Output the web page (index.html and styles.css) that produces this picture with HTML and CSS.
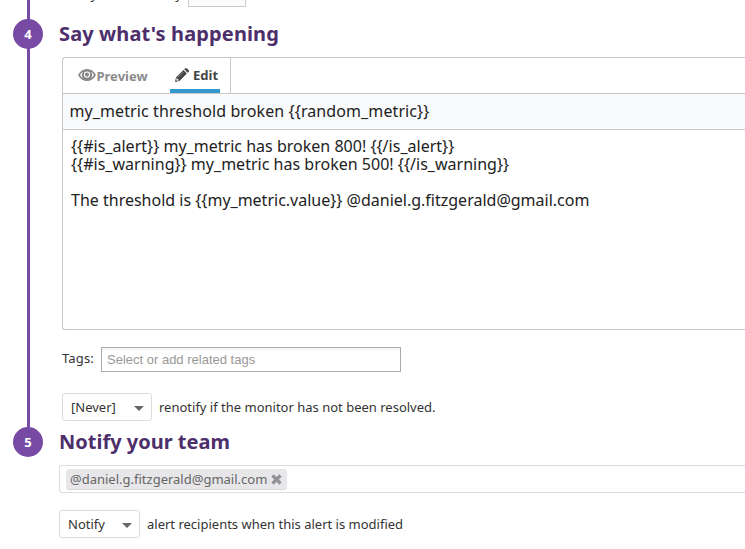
FILE: index.html
```html
<!DOCTYPE html>
<html lang="en">
<head>
<meta charset="utf-8">
<title>Monitor</title>
<link rel="stylesheet" href="styles.css">
</head>
<body>
<main class="monitor">
  <section class="step step-previous">
    <div class="rail"></div>
    <div class="content delay"><span class="delay-label">Delay evaluation by</span><span class="delay-input"></span></div>
  </section>
  <section class="step step-message">
    <div class="rail"><span class="number">4</span></div>
    <div class="content">
      <h2 class="title title-message">Say what's happening</h2>
      <div class="editor">
        <div class="tabs">
          <span class="tab preview">
            <svg class="eye" viewBox="0 0 18 14" width="18" height="14"><path d="M0 7C2.200 3 5.300 1 9 1s6.800 2 9 6c-2.200 4-5.300 6-9 6S2.200 11 0 7Z" fill="#888"/><path d="M2 7C2.900 5.500 3.900 4.400 5.200 3.700a5 5 0 0 0 0 6.600C3.900 9.600 2.900 8.500 2 7ZM16 7c-.9-1.500-1.900-2.600-3.200-3.300a5 5 0 0 1 0 6.600c1.300-.7 2.300-1.800 3.200-3.300Z" fill="#fff"/><circle cx="9" cy="6.600" r="2.600" fill="none" stroke="#fff" stroke-width="1.100"/></svg><span class="preview-text">Preview</span>
          </span>
          <span class="tab edit">
            <svg class="pencil" viewBox="0 0 14 14" width="14" height="14"><path d="M0 14 1 9.500 8.400 2.100l3.500 3.500L4.500 13ZM9.200 1.300 10.100.4q.9-.8 1.800 0l1.700 1.700q.8.900 0 1.800l-.9.900Z" fill="#444"/><path d="m1.800 10.200 2 2L2 12.700l-.7-.7ZM3 9.400 8.500 3.900" fill="#fff" stroke="#bbb" stroke-width=".6"/></svg><span class="edit-text">Edit</span>
          </span>
        </div>
        <div class="subject"><span class="subject-text">my_metric threshold broken {{random_metric}}</span></div>
        <div class="message"><div><span class="line1">{{#is_alert}} my_metric has broken 800! {{/is_alert}}</span></div><div><span class="line2">{{#is_warning}} my_metric has broken 500! {{/is_warning}}</span></div><div><br></div><div><span class="line3">The threshold is {{my_metric.value}} @daniel.g.fitzgerald@gmail.com</span></div></div>
      </div>
      <div class="tags"><span class="tags-label">Tags:</span><div class="tags-input"><span class="placeholder">Select or add related tags</span></div></div>
      <div class="row renotify">
        <div class="select never"><span class="never-text">[Never]</span><svg class="caret" width="10" height="5" viewBox="0 0 10 5"><path d="M0 0h10L5 5Z"/></svg></div>
        <span class="row-text renotify-text">renotify if the monitor has not been resolved.</span>
      </div>
    </div>
  </section>
  <section class="step step-team">
    <div class="rail"><span class="number">5</span></div>
    <div class="content">
      <h2 class="title title-team">Notify your team</h2>
      <div class="recipients"><span class="chip"><span class="chip-text">@daniel.g.fitzgerald@gmail.com</span><svg class="remove" width="11" height="11" viewBox="0 0 11 11"><path d="m1.500 1.500 8 8m0-8-8 8" fill="none" stroke="#929297" stroke-width="3.300"/></svg></span></div>
      <div class="row notify">
        <div class="select notify-select"><span class="notify-text">Notify</span><svg class="caret" width="10" height="5" viewBox="0 0 10 5"><path d="M0 0h10L5 5Z"/></svg></div>
        <span class="row-text modified-text">alert recipients when this alert is modified</span>
      </div>
    </div>
  </section>
</main>
</body>
</html>
```
FILE: styles.css
```css
* { box-sizing: border-box; }
body { margin: 0; overflow: hidden; background: #fff; color: #333; font: 13px/18px "Noto Sans", sans-serif; }
.monitor { width: 745px; height: 549px; overflow: hidden; }
.step { display: flex; }
.step-previous { height: 19px; }
.step-message { height: 408px; }
.step-team { height: 122px; }
.rail { flex: 0 0 59px; padding-left: 13px; background: linear-gradient(#774aa4, #774aa4) 27px 0 / 3px 100% no-repeat; }
.step-team .rail { background: none; }
.number { display: flex; align-items: center; justify-content: center; width: 30px; height: 30px; border-radius: 50%; background: #774aa4; color: #fff; font-size: 13px; font-weight: 700; }
.content { flex: 1; min-width: 0; }
.delay { display: flex; padding-left: 3px; }
.delay-label { width: 126px; margin-top: -15px; padding-left: 1px; white-space: nowrap; }
.delay-input { width: 58px; height: 27px; margin-top: -20px; border: 1px solid #ccc; background: #fcfcfc; }
.title { margin: 0; height: 30px; line-height: 30px; font-size: 20px; font-weight: 700; color: #4d2f6b; white-space: nowrap; }
.title-message { margin-bottom: 8px; letter-spacing: .12px; }
.editor { height: 273px; margin-left: 3px; border: 1px solid #c8c8cc; border-right: 0; border-radius: 3px 0 0 3px; overflow: hidden; }
.tabs { display: flex; width: 168px; height: 35px; padding-left: 15px; border-right: 1px solid #c8c8cc; font-weight: 700; }
.tab { display: flex; align-items: center; height: 35px; white-space: nowrap; }
.preview { width: 92px; color: #8b8b8b; }
.preview-text { margin-left: .5px; }
.edit { width: 50px; padding-left: 5px; color: #444; border-bottom: 4px solid #3399cc; }
.edit svg { margin: 0 4px 0 0; }
.edit svg, .edit-text { position: relative; top: 1px; }
.preview svg { position: relative; top: -1px; }
.subject { height: 37px; padding-left: 6.5px; border: solid #c8c8cc; border-width: 1px 0; background: #f9fafc; color: #222; font-size: 16px; line-height: 35px; letter-spacing: .1px; white-space: nowrap; }
.message { padding: 7px 0 0 8px; font-size: 16px; line-height: 18px; color: #222; white-space: nowrap; }
.line1, .line2 { letter-spacing: .015px; }
.tags { display: flex; margin: 17px 0 0 3px; height: 25px; line-height: 22px; }
.tags-label { width: 39px; letter-spacing: .15px; }
.tags-input { width: 300px; height: 25px; padding-left: 5px; border: 1px solid #aaa; background: linear-gradient(#f3f3f3, #fff 4px); color: #999; font: 13px/23px "Liberation Sans", sans-serif; }
.row { display: flex; align-items: center; height: 28px; white-space: nowrap; }
.select { display: flex; align-items: center; justify-content: space-between; height: 28px; padding: 0 7px 0 8px; border: 1px solid #dcdce0; border-radius: 3px; }
.caret { fill: #666; margin-top: 3px; }
.renotify { margin: 21px 0 0 3px; }
.never { width: 90px; margin-right: 7px; }
.recipients { display: flex; height: 28px; margin-top: 8px; padding: 3px 0 0 6px; border: 1px solid #dcdce0; border-right: 0; border-radius: 3px 0 0 3px; }
.chip { display: flex; align-items: center; width: 221px; height: 21px; padding-left: 4px; border-radius: 3px; background: #e7e7e9; border-bottom: 1px solid #d8d8da; color: #666; white-space: nowrap; }
.remove { margin-left: 4px; }
.notify { margin-top: 17px; }
.notify-select { width: 81px; margin-right: 7px; }
```
